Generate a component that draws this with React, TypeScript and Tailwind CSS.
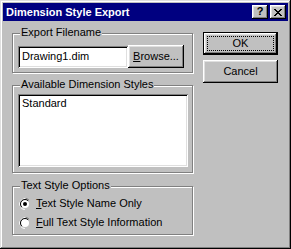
const bevel =
  "shadow-[inset_-1px_-1px_#000,inset_1px_1px_#fff,inset_-2px_-2px_#808080,inset_2px_2px_#dfdfdf]";
const sunken =
  "shadow-[inset_1px_1px_#808080,inset_-1px_-1px_#fff,inset_2px_2px_#000,inset_-2px_-2px_#dfdfdf]";

function Group({
  label,
  className,
  children,
}: {
  label: string;
  className: string;
  children: React.ReactNode;
}) {
  return (
    <div
      className={[
        "relative border border-[#808080] shadow-[inset_1px_1px_#fff,1px_1px_#fff]",
        className,
      ].join(" ")}
    >
      <span className="absolute left-[7px] top-[-8px] bg-[#c0c0c0] px-[1px] leading-[13px]">
        {label}
      </span>
      {children}
    </div>
  );
}

function Radio({ checked }: { checked?: boolean }) {
  return (
    <svg width="12" height="12" viewBox="0 0 12 12" className="shrink-0">
      <path d="M10 2A5.5 5.5 0 0 0 2 10" stroke="#808080" strokeWidth="1" fill="none" />
      <circle cx="6" cy="6" r="5.5" fill="none" stroke="#fff" strokeWidth="1" strokeDasharray="17.3 17.3" strokeDashoffset="-8.6" />
      <circle cx="6" cy="6" r="4" fill="#fff" />
      <path d="M9.2 2.8A4.5 4.5 0 0 0 2.8 9.2" stroke="#000" strokeWidth="1" fill="none" />
      {checked && <circle cx="6" cy="6" r="2" fill="#000" />}
    </svg>
  );
}

export default function App() {
  return (
    <div
      className="w-[291px] h-[249px] bg-[#c0c0c0] p-[3px] flex flex-col text-[11px] text-black shadow-[inset_-1px_-1px_#000,inset_1px_1px_#dfdfdf,inset_-2px_-2px_#808080,inset_2px_2px_#fff]"
      style={{ fontFamily: '"Liberation Sans", Arial, sans-serif' }}
    >
      <div className="h-[18px] bg-[#000080] flex items-center pl-[3px] pr-[2px]">
        <span className="text-white font-bold text-[11px] leading-none flex-1">
          Dimension Style Export
        </span>
        <div className={`w-[16px] h-[14px] bg-[#c0c0c0] ${bevel} flex items-center justify-center font-bold text-[11px] leading-none pb-[1px]`}>
          ?
        </div>
        <div className={`ml-[2px] w-[16px] h-[14px] bg-[#c0c0c0] ${bevel} flex items-center justify-center`}>
          <svg width="8" height="7" viewBox="0 0 8 7" shapeRendering="crispEdges">
            <path
              d="M0 0h2v1h-2zM6 0h2v1h-2zM1 1h2v1h-2zM5 1h2v1h-2zM2 2h4v1h-4zM3 3h2v1h-2zM2 4h4v1h-4zM1 5h2v1h-2zM5 5h2v1h-2zM0 6h2v1h-2zM6 6h2v1h-2z"
              fill="#000"
            />
          </svg>
        </div>
      </div>

      <div className="flex gap-[10px] pl-[9px]">
        <div className="w-[181px] flex flex-col pt-[12px]">
          <Group label="Export Filename" className="flex items-center pl-[5px] pt-[11px] pb-[4px]">
            <div className={`w-[110px] h-[22px] bg-white ${sunken} flex items-center pl-[4px]`}>
              Drawing1.dim
            </div>
            <div className={`w-[56px] h-[23px] ${bevel} flex items-center justify-center`}>
              <span>
                <span className="underline">B</span>rowse...
              </span>
            </div>
          </Group>

          <Group label="Available Dimension Styles" className="mt-[12px] pl-[5px] pr-[4px] pt-[8px] pb-[5px]">
            <div className={`h-[73px] bg-white ${sunken} pl-[4px] pt-[3px] leading-[13px]`}>
              Standard
            </div>
          </Group>

          <Group label="Text Style Options" className="mt-[13px] pl-[6px] pt-[7px] pb-[2px] flex flex-col">
            <div className="h-[19px] flex items-center gap-[5px]">
              <Radio checked />
              <span>
                <span className="underline">T</span>ext Style Name Only
              </span>
            </div>
            <div className="h-[19px] flex items-center gap-[5px]">
              <Radio />
              <span>
                <span className="underline">F</span>ull Text Style Information
              </span>
            </div>
          </Group>
        </div>

        <div className="w-[75px] flex flex-col pt-[11px] gap-[5px]">
          <div className="h-[23px] border border-black">
            <div className={`h-full ${bevel} p-[3px]`}>
              <div className="h-full border border-dotted border-black flex items-center justify-center">
                OK
              </div>
            </div>
          </div>
          <div className={`h-[23px] ${bevel} flex items-center justify-center`}>Cancel</div>
        </div>
      </div>
    </div>
  );
}
